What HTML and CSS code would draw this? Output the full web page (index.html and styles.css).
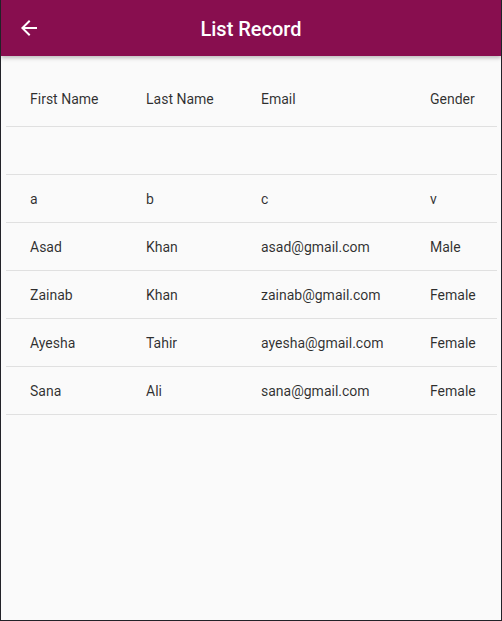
FILE: index.html
```html
<!DOCTYPE html>
<html>
<head>
<meta charset="utf-8">
<link rel="stylesheet" href="styles.css">
</head>
<body>
<div class="frame">
  <header class="appbar">
    <svg class="back" viewBox="0 0 24 24" width="24" height="24"><path d="M20 11H7.83l5.59-5.59L12 4l-8 8 8 8 1.41-1.41L7.83 13H20v-2z" fill="#fff"/></svg>
    <h1 class="title">List Record</h1>
  </header>
  <main class="content">
    <div class="table">
      <div class="row head"><span>First Name</span><span>Last Name</span><span>Email</span><span>Gender</span></div>
      <div class="row"><span></span><span></span><span></span><span></span></div>
      <div class="row"><span>a</span><span>b</span><span>c</span><span>v</span></div>
      <div class="row"><span>Asad</span><span>Khan</span><span>asad@gmail.com</span><span>Male</span></div>
      <div class="row"><span>Zainab</span><span>Khan</span><span>zainab@gmail.com</span><span>Female</span></div>
      <div class="row"><span>Ayesha</span><span>Tahir</span><span>ayesha@gmail.com</span><span>Female</span></div>
      <div class="row"><span>Sana</span><span>Ali</span><span>sana@gmail.com</span><span>Female</span></div>
    </div>
  </main>
</div>
</body>
</html>
```
FILE: styles.css
```css
html, body {
  margin: 0;
  padding: 0;
  background: #222228;
}
.frame {
  box-sizing: border-box;
  width: 502px;
  height: 621px;
  border: 1px solid #222228;
  border-top: none;
  background: #fafafa;
  font-family: Roboto, "Liberation Sans", sans-serif;
  display: flex;
  flex-direction: column;
  overflow: hidden;
}
.appbar {
  position: relative;
  height: 56px;
  flex: none;
  background: #880e4f;
  display: flex;
  align-items: center;
  justify-content: center;
  box-shadow: 0 2px 4px rgba(0,0,0,0.25);
  z-index: 1;
}
.back {
  position: absolute;
  left: 16px;
  top: 16px;
}
.title {
  margin: 2px 0 0 0;
  color: #fff;
  font-size: 20px;
  font-weight: 500;
  line-height: 1;
}
.content {
  flex: 1;
  padding: 15px 4px 0 5px;
}
.row {
  box-sizing: border-box;
  height: 48px;
  display: grid;
  grid-template-columns: 116px 115px 169px 1fr;
  align-items: center;
  padding-left: 24px;
  border-bottom: 1px solid #e0e0e0;
  font-size: 14px;
  color: rgba(0,0,0,0.82);
}
.row.head {
  height: 56px;
}
```
